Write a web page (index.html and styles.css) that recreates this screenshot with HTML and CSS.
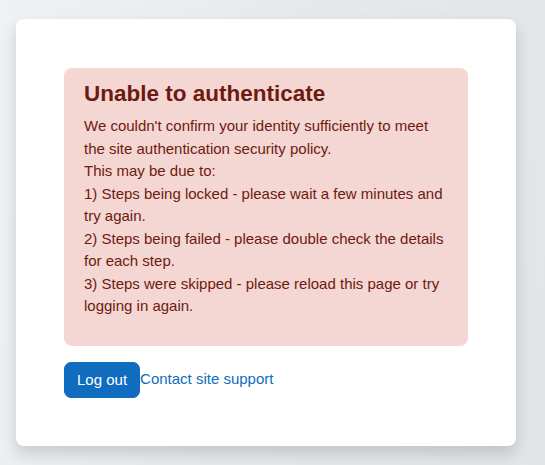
FILE: index.html
```html
<!DOCTYPE html>
<html lang="en">
<head>
  <meta charset="UTF-8" />
  <meta name="viewport" content="width=device-width, initial-scale=1" />
  <title>Unable to authenticate</title>
  <link rel="stylesheet" href="styles.css">
</head>
<body>
  <div class="login-wrapper">
    <div class="login-card">
      <div class="alert alert-danger">
        <h4 class="alert-heading">Unable to authenticate</h4>
        <p>
          We couldn't confirm your identity sufficiently to meet the site authentication security policy.<br>
          This may be due to:<br>
          1) Steps being locked - please wait a few minutes and try again.<br>
          2) Steps being failed - please double check the details for each step.<br>
          3) Steps were skipped - please reload this page or try logging in again.
        </p>
      </div>
      <div class="actions">
        <button class="btn btn-primary" type="button">Log out</button>
        <a class="support-link" href="#">Contact site support</a>
      </div>
    </div>
  </div>
</body>
</html>
```

FILE: styles.css
```css
html, body {
  height: 100%;
}
body {
  margin: 0;
  font-family: "Liberation Sans", Arial, sans-serif;
  font-size: 15px;
  line-height: 1.5;
  color: #1d2125;
  background: linear-gradient(100deg, #f0f1f3 0%, #e6e9ec 50%, #e2e5e8 100%);
}
.login-wrapper {
  padding: 19px 29px 19px 16px;
}
.login-card {
  background: #fff;
  border-radius: 8px;
  padding: 49px 48px 48px;
  box-shadow: 0 8px 16px rgba(0, 0, 0, 0.15);
}
.alert {
  border-radius: 8px;
  padding: 12px 20px;
}
.alert-danger {
  background-color: #f4d6d2;
  color: #6e1a11;
}
.alert-heading {
  margin: 0 0 8px;
  font-size: 22.5px;
  line-height: 1.2;
  font-weight: bold;
}
.alert p {
  margin: 0 0 16px;
}
.actions {
  display: flex;
  align-items: center;
  margin-top: 16px;
}
.btn {
  font-family: inherit;
  font-size: 15px;
  line-height: 1.5;
  padding: 6px 12px;
  border: 1px solid transparent;
  border-radius: 7px;
  cursor: pointer;
}
.btn-primary {
  background-color: #0f6cbf;
  border-color: #0f6cbf;
  color: #fff;
}
.support-link {
  color: #0f6cbf;
  text-decoration: none;
  margin-top: -2px;
}
```
